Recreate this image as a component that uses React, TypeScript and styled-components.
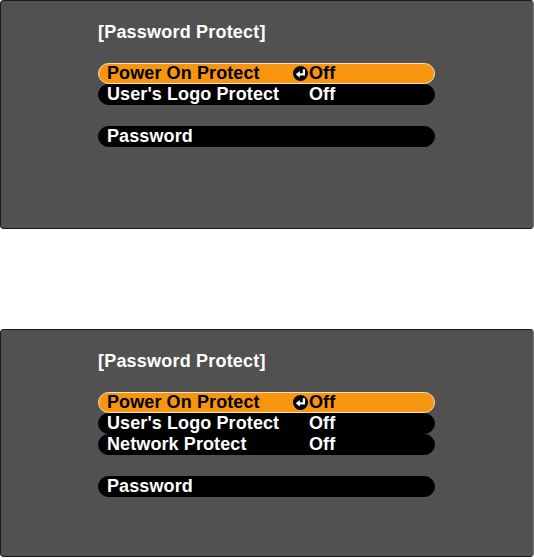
import React from 'react';
import styled, {createGlobalStyle} from 'styled-components';

const GlobalStyle = createGlobalStyle`
  html, body {
    margin: 0;
    padding: 0;
    background: #ffffff;
  }
  body {
    font-family: "Liberation Sans", Arial, sans-serif;
  }
`;

const Page = styled.div`
  display: flex;
  flex-direction: column;
  gap: 100px;
  width: 534px;
`;

const Screen = styled.section<{$height: number}>`
  box-sizing: border-box;
  height: ${p => p.$height}px;
  width: 534px;
  background: #515151;
  border: 1px solid #1a1a1a;
  border-right-color: #7a7a72;
  border-radius: 4px;
  padding: 20px 0 0 97px;
  color: #ffffff;
`;

const Title = styled.h1`
  margin: 0 0 20px 0;
  font-size: 18px;
  font-weight: bold;
  line-height: 22px;
  letter-spacing: 0.2px;
`;

const List = styled.div`
  width: 337px;
  display: flex;
  flex-direction: column;
`;

const Row = styled.div<{$active?: boolean; $gapAbove?: boolean}>`
  box-sizing: border-box;
  height: 21px;
  margin-top: ${p => (p.$gapAbove ? '21px' : '0')};
  display: grid;
  grid-template-columns: 186px 16px 1fr;
  align-items: center;
  padding-left: 8px;
  border-radius: 11px;
  background: ${p => (p.$active ? '#f7960e' : '#000000')};
  border: 1px solid ${p => (p.$active ? '#f3e4c4' : '#000000')};
  color: ${p => (p.$active ? '#000000' : '#ffffff')};
  font-size: 18px;
  font-weight: bold;
  line-height: 19px;
  letter-spacing: 0.1px;
  white-space: nowrap;
`;

const Label = styled.span``;

const Value = styled.span``;

const EnterMark = styled.svg`
  width: 15px;
  height: 15px;
  display: block;
`;

function EnterIcon() {
  return (
    <EnterMark viewBox="0 0 14 14">
      <circle cx="7" cy="7" r="7" fill="#000"/>
      <path d="M10.2 3 V7.8 H5.6" stroke="#fff" strokeWidth="2.1" fill="none"/>
      <path d="M2.6 7.8 L6.3 4.7 V10.9 Z" fill="#fff"/>
    </EnterMark>
  );
}

type Item = {label: string; value?: string};

function Menu({items, height}: {items: Item[]; height: number}) {
  return (
    <Screen $height={height}>
      <Title>[Password Protect]</Title>
      <List>
        {items.map((item, i) =>
          <Row key={item.label} $active={i === 0}>
            <Label>{item.label}</Label>
            <span>{i === 0 && <EnterIcon/>}</span>
            <Value>{item.value}</Value>
          </Row>
        )}
        <Row $gapAbove>
          <Label>Password</Label>
        </Row>
      </List>
    </Screen>
  );
}

export default function App() {
  return (
    <>
      <GlobalStyle/>
      <Page>
        <Menu
          height={229}
          items={[
            {label: 'Power On Protect', value: 'Off'},
            {label: "User's Logo Protect", value: 'Off'},
          ]}
        />
        <Menu
          height={228}
          items={[
            {label: 'Power On Protect', value: 'Off'},
            {label: "User's Logo Protect", value: 'Off'},
            {label: 'Network Protect', value: 'Off'},
          ]}
        />
      </Page>
    </>
  );
}
